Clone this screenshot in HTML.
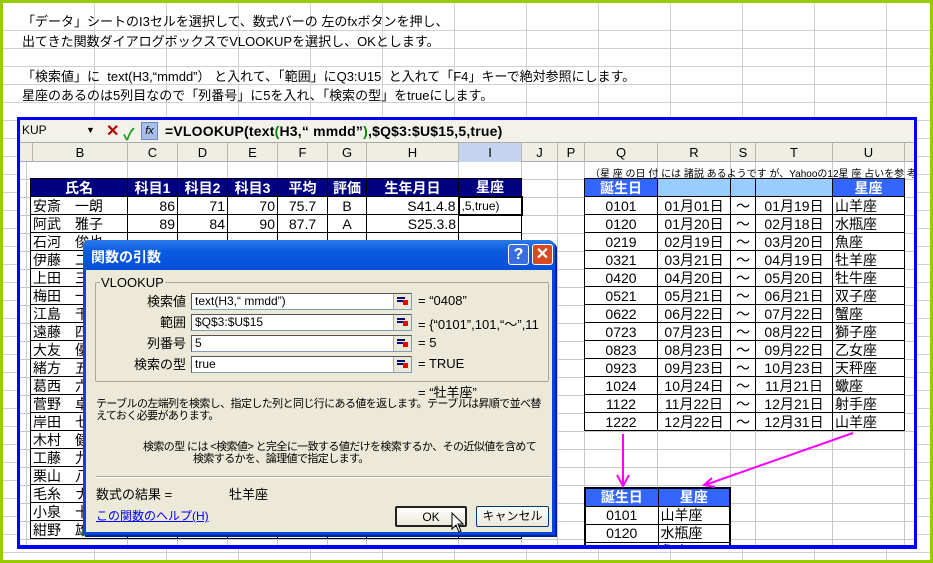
<!DOCTYPE html>
<html><head><meta charset="utf-8"><style>
*{margin:0;padding:0;box-sizing:border-box}
body{width:933px;height:563px;overflow:hidden;position:relative;background:#fff;font-family:"Liberation Sans","Noto Sans CJK JP",sans-serif;font-size:13px;color:#000}
.a{position:absolute;white-space:nowrap}
#outer{position:absolute;left:0;top:0;width:933px;height:563px;border:3px solid #99cc00;border-bottom-width:3px;
background-image:repeating-linear-gradient(to bottom,transparent 0 17px,#d0d0d0 17px 18px),repeating-linear-gradient(to right,transparent 0 71px,#d0d0d0 71px 72px);background-position:0 10px,20px 0}
#frame{position:absolute;left:17px;top:117px;width:900px;height:432px;border:3px solid #0000ff;background:#fff;overflow:hidden}
#grid{position:absolute;left:0;top:42px;width:900px;height:400px;background-image:repeating-linear-gradient(to bottom,transparent 0 17px,#c8c8c8 17px 18px)}
.vl{position:absolute;top:24px;width:1px;height:420px;background:#c8c8c8}
#fbar{position:absolute;left:0;top:0;width:900px;height:23px;background:#f2f1ea;border-bottom:1px solid #aaa}
#colh{position:absolute;left:0;top:23px;width:900px;height:19px;background:#efeee4;border-bottom:1px solid #aaa}
.ch{position:absolute;top:0;height:19px;line-height:19px;text-align:center;border-right:1px solid #b8b8a8;font-size:13px}
table{position:absolute;border-collapse:collapse;font-size:14px}
td{border:1px solid #000;height:18px;padding:0 2px;line-height:16px;background:#fff}
.hd td{background:#000080;color:#fff;font-weight:bold;text-align:center}
.r{text-align:right}.c{text-align:center}
#dlg{position:absolute;left:83px;top:240px;width:472px;height:295px;background:#ece9d8;border:3px solid #0846d8;border-top:0;border-radius:7px 7px 0 0;box-shadow:2px 2px 0 #00248c}
#tt{position:absolute;left:-3px;top:0;width:472px;height:30px;background:linear-gradient(#2a7ae8,#0a5ae0 40%,#0550d8);border-radius:7px 7px 0 0;color:#fff;font-weight:bold;font-size:14px;padding:7px 0 0 8px}
.tb{position:absolute;top:4px;width:21px;height:21px;border:1px solid #fff;border-radius:3px;color:#fff;font-weight:bold;text-align:center;line-height:19px;font-size:16px}
.lb{position:absolute;width:90px;text-align:right;font-size:13px}
.in{position:absolute;left:105px;width:221px;height:17px;background:#fff;border:1px solid #7f9db9;border-top-color:#555;border-left-color:#555;font-size:12px;padding-left:3px;line-height:15px}
.pk{position:absolute;right:0;top:0;width:18px;height:15px;background:#ece9d8;border-left:1px solid #aaa}
.pk:before{content:"";position:absolute;left:3px;top:3px;width:8px;height:2px;background:#00087a;box-shadow:0 3px 0 #00087a}
.pk:after{content:"";position:absolute;left:9px;top:6px;width:5px;height:5px;background:#e00}
.eq{position:absolute;left:332px;font-size:13px}
.btn{position:absolute;top:266px;height:21px;border:1px solid #003c74;background:linear-gradient(#fff,#ece9d8);text-align:center;line-height:19px;font-size:12px;border-radius:2px}
.ds{font-size:11px;letter-spacing:-0.6px;line-height:12px}
</style></head><body>
<div id="outer"></div>
<div class="a" style="left:22px;top:11px">「データ」シートのI3セルを選択して、数式バーの 左のfxボタンを押し、</div>
<div class="a" style="left:22px;top:31px">出てきた関数ダイアログボックスでVLOOKUPを選択し、OKとします。</div>
<div class="a" style="left:22px;top:66px">「検索値」に&nbsp; text(H3,“mmdd”） と入れて、「範囲」にQ3:U15&nbsp; と入れて「F4」キーで絶対参照にします。</div>
<div class="a" style="left:22px;top:85px">星座のあるのは5列目なので「列番号」に5を入れ、「検索の型」をtrueにします。</div>

<div id="frame">
<div id="grid"></div>
<div class="vl" style="left:6px"></div><div class="vl" style="left:107px"></div><div class="vl" style="left:157px"></div><div class="vl" style="left:207px"></div><div class="vl" style="left:257px"></div><div class="vl" style="left:307px"></div><div class="vl" style="left:346px"></div><div class="vl" style="left:438px"></div><div class="vl" style="left:501px"></div><div class="vl" style="left:537px"></div><div class="vl" style="left:564px"></div><div class="vl" style="left:637px"></div><div class="vl" style="left:710px"></div><div class="vl" style="left:735px"></div><div class="vl" style="left:812px"></div><div class="vl" style="left:884px"></div>
<div id="fbar">
<div class="a" style="left:2px;top:3px;font-size:12px">KUP</div>
<div class="a" style="left:66px;top:5px;font-size:9px">▼</div>
<div class="a" style="left:86px;top:1px;color:#b00;font-weight:bold;font-size:16px">✕</div>
<div class="a" style="left:103px;top:1px;color:#1a9a1a;font-weight:bold;font-size:16px">✓</div>
<div class="a" style="left:121px;top:2px;width:17px;height:18px;background:#a8bde8;border:1px solid #6a87c8;font-size:11px;font-style:italic;text-align:center;line-height:16px">fx</div>
<div class="a" style="left:145px;top:3px;font-size:14px;font-weight:bold;letter-spacing:0.2px">=VLOOKUP(text<span style="color:#080">(</span>H3,“ mmdd”<span style="color:#080">)</span>,$Q$3:$U$15,5,true)</div>
</div>
<div id="colh">
<div class="ch" style="left:0;width:13px"></div>
<div class="ch" style="left:13px;width:95px">B</div><div class="ch" style="left:108px;width:50px">C</div><div class="ch" style="left:158px;width:50px">D</div><div class="ch" style="left:208px;width:50px">E</div><div class="ch" style="left:258px;width:50px">F</div><div class="ch" style="left:308px;width:39px">G</div><div class="ch" style="left:347px;width:92px">H</div><div class="ch" style="left:439px;width:63px;background:#c4d4ee">I</div><div class="ch" style="left:502px;width:36px">J</div><div class="ch" style="left:538px;width:27px">P</div><div class="ch" style="left:565px;width:73px">Q</div><div class="ch" style="left:638px;width:73px">R</div><div class="ch" style="left:711px;width:25px">S</div><div class="ch" style="left:736px;width:77px">T</div><div class="ch" style="left:813px;width:72px">U</div>
</div>
<div class="a" style="left:570px;top:45px;font-size:10px">（星 座 の日 付 には 諸説 あるようです が、Yahooの12星 座 占いを参 考 にしま</div>
</div>

<table style="left:30px;top:178px">
<tr class="hd"><td style="width:97px">氏名</td><td style="width:50px">科目1</td><td style="width:50px">科目2</td><td style="width:50px">科目3</td><td style="width:50px">平均</td><td style="width:39px">評価</td><td style="width:92px">生年月日</td><td style="width:63px">星座</td></tr>
<tr><td>安斎　一朗</td><td class="r">86</td><td class="r">71</td><td class="r">70</td><td class="c">75.7</td><td class="c">B</td><td class="r">S41.4.8</td><td style="font-size:12px;border:2px solid #000">,5,true)</td></tr>
<tr><td>阿武　雅子</td><td class="r">89</td><td class="r">84</td><td class="r">90</td><td class="c">87.7</td><td class="c">A</td><td class="r">S25.3.8</td><td></td></tr>
<tr><td>石河　俊也</td><td></td><td></td><td></td><td></td><td></td><td></td><td></td></tr>
<tr><td>伊藤　二</td><td></td><td></td><td></td><td></td><td></td><td></td><td></td></tr>
<tr><td>上田　三</td><td></td><td></td><td></td><td></td><td></td><td></td><td></td></tr>
<tr><td>梅田　一</td><td></td><td></td><td></td><td></td><td></td><td></td><td></td></tr>
<tr><td>江島　千</td><td></td><td></td><td></td><td></td><td></td><td></td><td></td></tr>
<tr><td>遠藤　四</td><td></td><td></td><td></td><td></td><td></td><td></td><td></td></tr>
<tr><td>大友　優</td><td></td><td></td><td></td><td></td><td></td><td></td><td></td></tr>
<tr><td>緒方　五</td><td></td><td></td><td></td><td></td><td></td><td></td><td></td></tr>
<tr><td>葛西　六</td><td></td><td></td><td></td><td></td><td></td><td></td><td></td></tr>
<tr><td>菅野　卓</td><td></td><td></td><td></td><td></td><td></td><td></td><td></td></tr>
<tr><td>岸田　七</td><td></td><td></td><td></td><td></td><td></td><td></td><td></td></tr>
<tr><td>木村　健</td><td></td><td></td><td></td><td></td><td></td><td></td><td></td></tr>
<tr><td>工藤　九</td><td></td><td></td><td></td><td></td><td></td><td></td><td></td></tr>
<tr><td>栗山　八</td><td></td><td></td><td></td><td></td><td></td><td></td><td></td></tr>
<tr><td>毛糸　ナ</td><td></td><td></td><td></td><td></td><td></td><td></td><td></td></tr>
<tr><td>小泉　十</td><td></td><td></td><td></td><td></td><td></td><td></td><td></td></tr>
<tr><td>紺野　雄太</td><td class="r">88</td><td class="r">89</td><td class="r">90</td><td class="c">89.0</td><td class="c">A</td><td class="r">S55.3.21</td><td></td></tr>
</table>

<table style="left:584px;top:178px;font-size:14px">
<tr><td style="width:73px;background:#3366ff;color:#fff;font-weight:bold" class="c">誕生日</td><td style="width:73px;background:#99ccff"></td><td style="width:25px;background:#99ccff"></td><td style="width:77px;background:#99ccff"></td><td style="width:72px;background:#3366ff;color:#fff;font-weight:bold" class="c">星座</td></tr>
<tr><td class="c">0101</td><td class="c">01月01日</td><td class="c">～</td><td class="c">01月19日</td><td>山羊座</td></tr>
<tr><td class="c">0120</td><td class="c">01月20日</td><td class="c">～</td><td class="c">02月18日</td><td>水瓶座</td></tr>
<tr><td class="c">0219</td><td class="c">02月19日</td><td class="c">～</td><td class="c">03月20日</td><td>魚座</td></tr>
<tr><td class="c">0321</td><td class="c">03月21日</td><td class="c">～</td><td class="c">04月19日</td><td>牡羊座</td></tr>
<tr><td class="c">0420</td><td class="c">04月20日</td><td class="c">～</td><td class="c">05月20日</td><td>牡牛座</td></tr>
<tr><td class="c">0521</td><td class="c">05月21日</td><td class="c">～</td><td class="c">06月21日</td><td>双子座</td></tr>
<tr><td class="c">0622</td><td class="c">06月22日</td><td class="c">～</td><td class="c">07月22日</td><td>蟹座</td></tr>
<tr><td class="c">0723</td><td class="c">07月23日</td><td class="c">～</td><td class="c">08月22日</td><td>獅子座</td></tr>
<tr><td class="c">0823</td><td class="c">08月23日</td><td class="c">～</td><td class="c">09月22日</td><td>乙女座</td></tr>
<tr><td class="c">0923</td><td class="c">09月23日</td><td class="c">～</td><td class="c">10月23日</td><td>天秤座</td></tr>
<tr><td class="c">1024</td><td class="c">10月24日</td><td class="c">～</td><td class="c">11月21日</td><td>蠍座</td></tr>
<tr><td class="c">1122</td><td class="c">11月22日</td><td class="c">～</td><td class="c">12月21日</td><td>射手座</td></tr>
<tr><td class="c">1222</td><td class="c">12月22日</td><td class="c">～</td><td class="c">12月31日</td><td>山羊座</td></tr>
</table>

<div style="position:absolute;left:584px;top:487px;width:147px;height:61px;overflow:hidden">
<table style="left:0;top:0;border:2px solid #000">
<tr><td style="width:73px;background:#3366ff;color:#fff;font-weight:bold" class="c">誕生日</td><td style="width:72px;background:#3366ff;color:#fff;font-weight:bold" class="c">星座</td></tr>
<tr><td class="c">0101</td><td>山羊座</td></tr>
<tr><td class="c">0120</td><td>水瓶座</td></tr>
<tr><td class="c">0219</td><td>魚座</td></tr>
</table></div>
<div style="position:absolute;left:17px;top:545px;width:900px;height:4px;background:#0000ff"></div>

<svg style="position:absolute;left:0;top:0" width="933" height="563">
<g stroke="#ff00ff" stroke-width="2" fill="none">
<path d="M623 434 L623 485 M617 475 L623 486 L629 475"/>
<path d="M853 433 L705 485 M712 478 L704 485 L715 487"/>
</g></svg>

<div id="dlg">
<div id="tt">関数の引数
<div class="tb" style="left:425px;background:#3a6ee0">?</div>
<div class="tb" style="left:449px;background:#d84a20">✕</div></div>
<div style="position:absolute;left:9px;top:42px;width:454px;height:100px;border:1px solid #aca899;border-radius:2px"></div>
<div class="a" style="left:14px;top:35px;background:#ece9d8;padding:0 1px;font-size:13px">VLOOKUP</div>
<div class="lb" style="left:10px;top:51px">検索値</div>
<div class="lb" style="left:10px;top:72px">範囲</div>
<div class="lb" style="left:10px;top:93px">列番号</div>
<div class="lb" style="left:10px;top:114px">検索の型</div>
<div class="in" style="top:53px">text(H3,“ mmdd”)<div class="pk"></div></div>
<div class="in" style="top:74px">$Q$3:$U$15<div class="pk"></div></div>
<div class="in" style="top:95px">5<div class="pk"></div></div>
<div class="in" style="top:116px">true<div class="pk"></div></div>
<div class="eq" style="top:53px">= “0408”</div>
<div class="eq" style="top:74px">= {“0101”,101,“～”,11</div>
<div class="eq" style="top:95px">= 5</div>
<div class="eq" style="top:116px">= TRUE</div>
<div class="eq" style="top:142px">= “牡羊座”</div>
<div class="a ds" style="left:10px;top:158px">テーブルの左端列を検索し、指定した列と同じ行にある値を返します。テーブルは昇順で並べ替<br>えておく必要があります。</div>
<div class="a ds" style="left:57px;top:201px">検索の型 には &lt;検索値&gt; と完全に一致する値だけを検索するか、その近似値を含めて<br><span style="padding-left:50px">検索するかを、論理値で指定します。</span></div>
<div style="position:absolute;left:10px;top:236px;width:455px;height:2px;border-top:1px solid #aca899;border-bottom:1px solid #fff"></div>
<div class="a" style="left:10px;top:244px">数式の結果 =</div>
<div class="a" style="left:143px;top:244px">牡羊座</div>
<div class="a" style="left:10px;top:267px;color:#00f;text-decoration:underline;font-size:12px">この関数のヘルプ(H)</div>
<div class="btn" style="left:309px;width:72px;border:2px solid #222">OK</div>
<div class="btn" style="left:390px;width:73px">キャンセル</div>
<svg class="a" style="left:365px;top:272px" width="14" height="22"><path d="M1 1 L1 17 L5 13 L8 20 L10 19 L7 12 L12 12 Z" fill="#fff" stroke="#000"/></svg>
</div>
</body></html>
